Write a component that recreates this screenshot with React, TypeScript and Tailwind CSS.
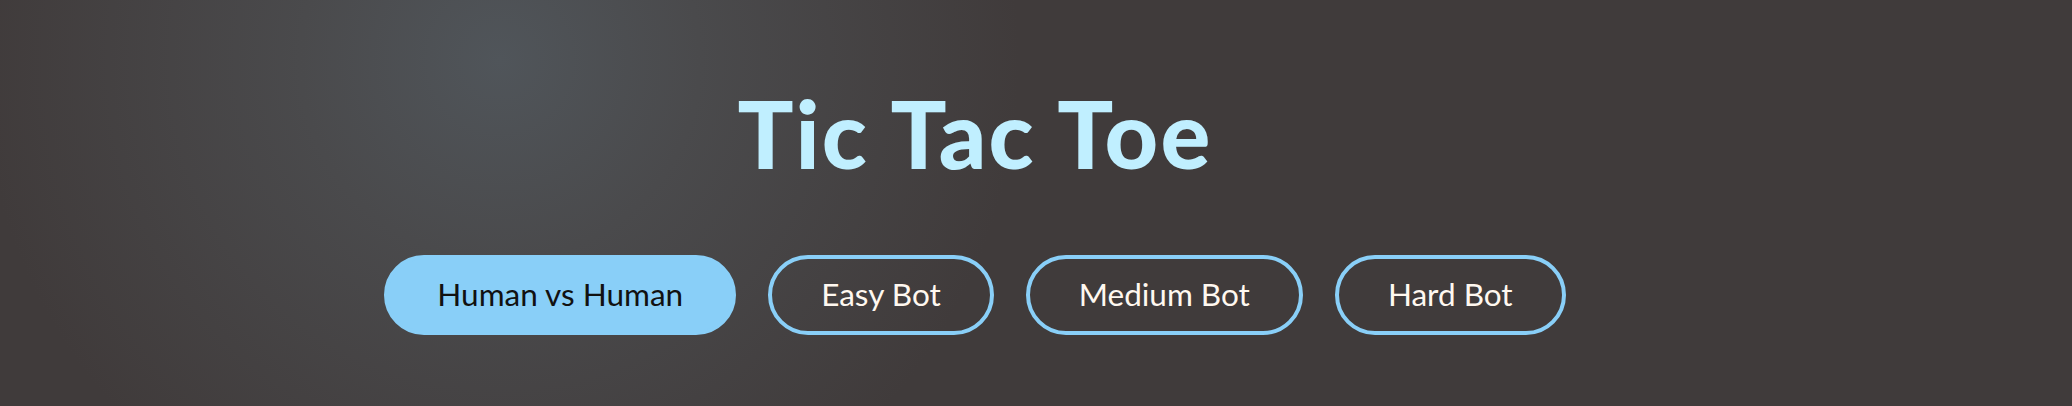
import { useState } from 'react';

type Mode = 'human' | 'easy' | 'medium' | 'hard';

const modes: { id: Mode; label: string }[] = [
  { id: 'human', label: 'Human vs Human' },
  { id: 'easy', label: 'Easy Bot' },
  { id: 'medium', label: 'Medium Bot' },
  { id: 'hard', label: 'Hard Bot' },
];

export default function App() {
  const [mode, setMode] = useState<Mode>('human');

  return (
    <div className="w-full h-[406px] overflow-hidden bg-[#403b3b] bg-[radial-gradient(circle_at_500px_60px,#50555a_0px,#4a4a4c_200px,#403b3b_520px)] font-['Lato','Noto_Sans',sans-serif]">
      <div className="w-[1950px] flex flex-col items-center pt-[78px]">
        <h1 className="text-[93px] leading-[110px] font-black text-[#c0efff] tracking-[2.2px]">
          Tic Tac Toe
        </h1>

        {/* Mode picker */}
        <div className="flex gap-8 mt-[67px]">
          {modes.map((m) => (
            <button
              key={m.id}
              onClick={() => setMode(m.id)}
              className={`h-[80px] px-[49px] rounded-full border-4 border-[#89cff8] text-[31.5px] leading-none ${
                mode === m.id ? 'bg-[#89cff8] text-[#111]' : 'bg-transparent text-[#fff8f0]'
              }`}
            >
              {m.label}
            </button>
          ))}
        </div>
      </div>
    </div>
  );
}
